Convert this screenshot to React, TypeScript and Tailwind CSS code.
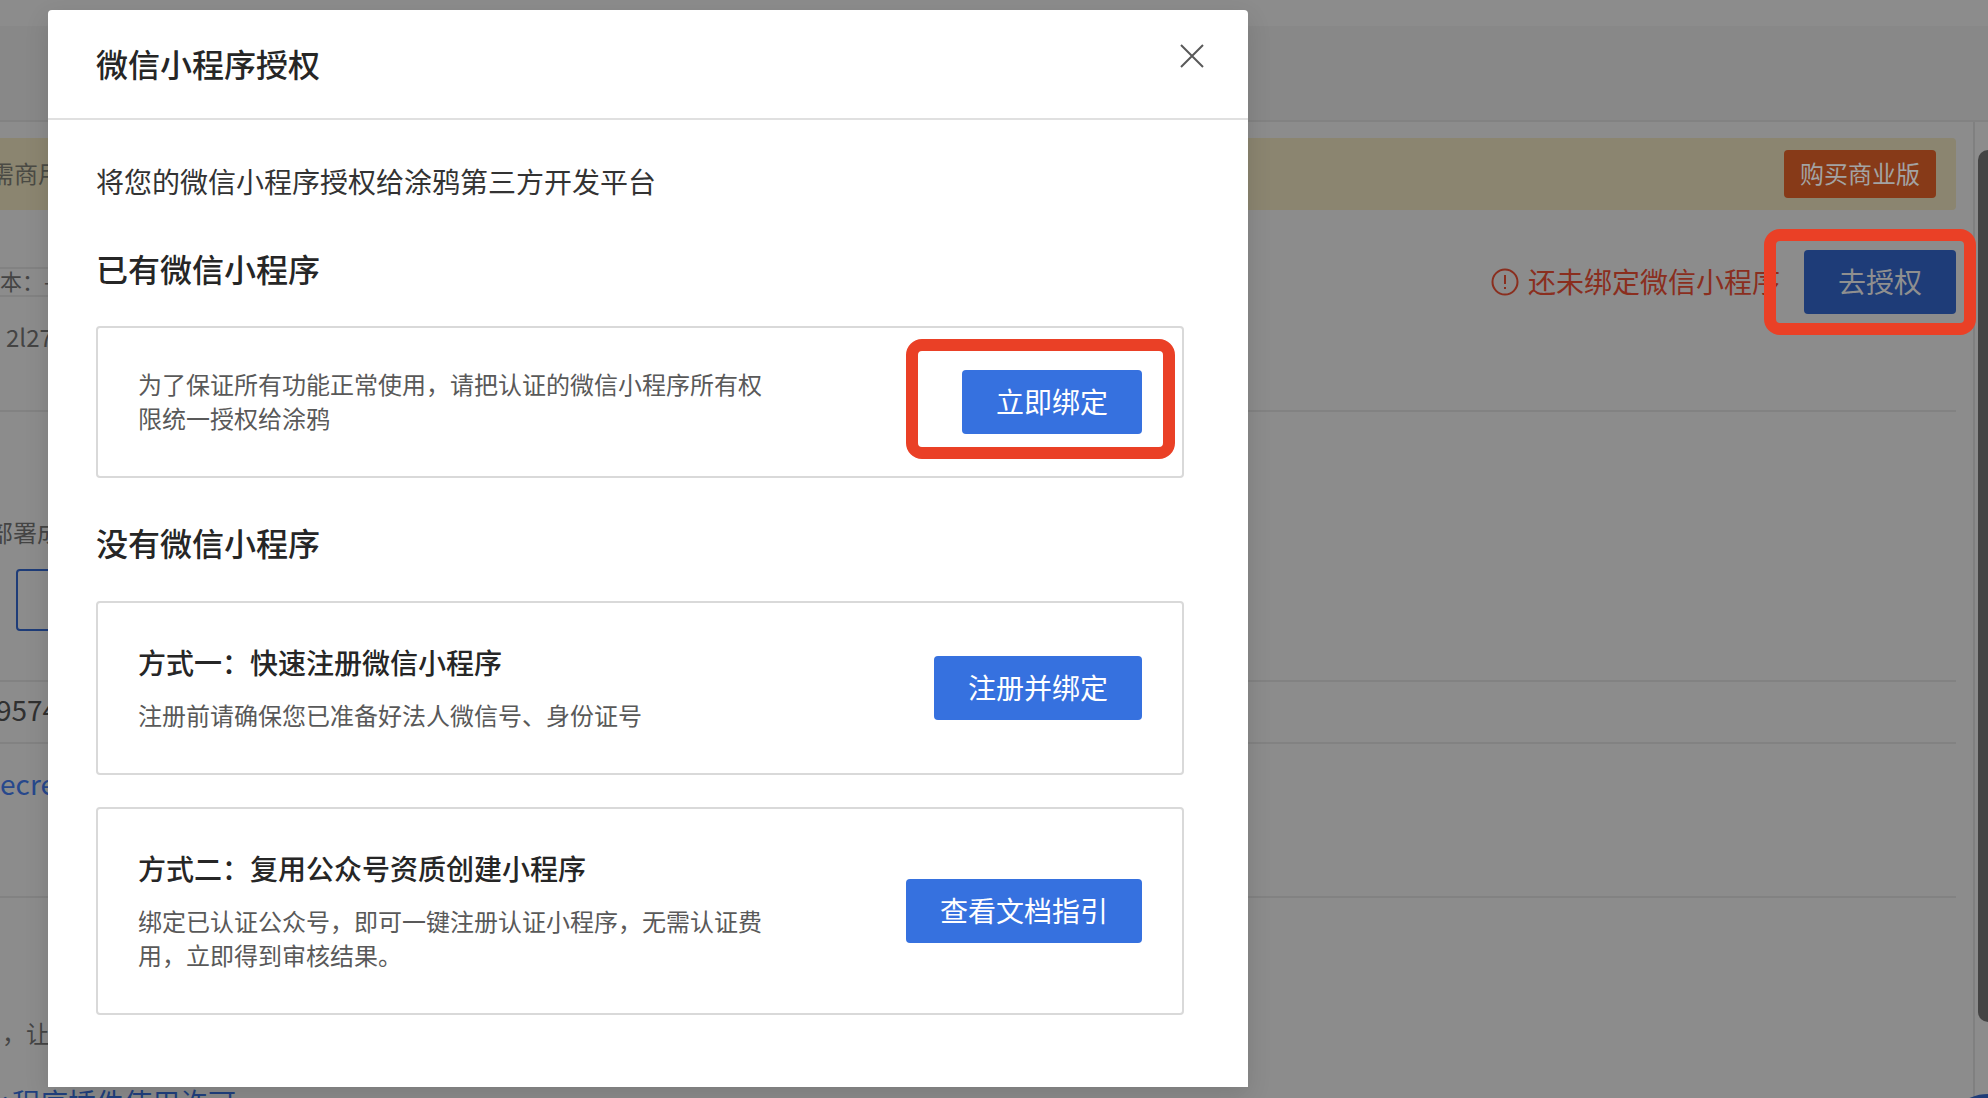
const cjk = "font-['PingFang_SC','Noto_Sans_CJK_SC','Noto_Sans',sans-serif]"

function BlueButton({ label }: { label: string }) {
  return (
    <button className="h-16 shrink-0 rounded bg-[#3671df] px-[34px] pb-[2px] text-[28px] text-white">
      {label}
    </button>
  )
}

function Highlight({ className }: { className: string }) {
  return <div className={`absolute rounded-[16px] border-[12px] border-[#ea4026] ${className}`} />
}

function BackgroundPage() {
  return (
    <div className="flex h-full w-full flex-col overflow-hidden bg-[#8c8c8c] text-[#444444]">
      <div className="h-[26px] shrink-0 bg-[#8c8c8c]" />
      <div className="h-[96px] shrink-0 border-b-2 border-[#828282] bg-[#888888]" />
      <div className="flex min-h-0 flex-1">
        <div className="w-[1973px] shrink-0 pr-[17px]">
          <div className="mt-4 flex h-[72px] items-center justify-between rounded-r bg-[#8b8570] pr-5">
            <span className="-ml-[10px] pb-[2px] text-[24px] text-[#4a4a44]">需商用版</span>
            <button className="h-12 w-[152px] rounded bg-[#873a18] pb-[2px] text-[24px] text-[#a3a3a3]">购买商业版</button>
          </div>

          <div className="flex h-[202px] items-start justify-between border-b-2 border-[#828282]">
            <div className="mt-[57px] flex flex-col">
              <span className="h-[30px] border-y-2 border-[#828282] pr-12 text-[22px] leading-[22px]">本：-</span>
              <span className="mt-[25px] pl-[6px] text-[24px] leading-[30px]">2l27</span>
            </div>
            <div className="relative mt-10 flex items-center">
              <svg className="mr-[9px] h-[28px] w-[28px]" viewBox="0 0 28 28" fill="none" stroke="#8a2e1e" strokeWidth="2">
                <circle cx="14" cy="14" r="12.5" />
                <path d="M14 7v9M14 19v2" />
              </svg>
              <span className="pb-[2px] text-[28px] text-[#8a2e1e]">还未绑定微信小程序</span>
              <button className="ml-6 h-16 w-[152px] rounded bg-[#1e3c78] pb-[2px] text-[28px] text-[#8f8f8f]">去授权</button>
              <Highlight className="-top-[21px] -right-[20px] h-[106px] w-[212px]" />
            </div>
          </div>

          <div className="mt-[100px] -ml-[11px] text-[24px] leading-[40px]">部署成功</div>
          <div className="mt-[17px] ml-4 h-[62px] w-[120px] rounded border-2 border-[#1e3c78]" />
          <div className="mt-[49px] border-y-2 border-[#828282] pt-[10px] pb-4 text-[28px] leading-[34px] text-[#303030]">
            <span className="-ml-[4px]">9574</span>
          </div>
          <div className="mt-[19px] -ml-[13px] text-[28px] leading-[40px] text-[#27488c]">secret</div>
          <div className="mt-[93px] border-b-2 border-[#828282]" />
          <div className="mt-[115px] pl-[2px] text-[24px] leading-[40px]">，让</div>
          <div className="mt-[29px] -ml-4 text-[28px] leading-[40px] text-[#20407f]">小程序插件使用许可</div>
        </div>
        <div className="flex w-[15px] shrink-0 border-l-2 border-[#808080]">
          <div className="mt-[28px] ml-[3px] h-[872px] w-[10px] rounded-l-[10px] bg-[#444444]" />
        </div>
      </div>
    </div>
  )
}

function AuthDialog() {
  return (
    <div className="absolute top-[10px] left-12 h-[1077px] w-[1200px] rounded-t bg-white shadow-[0_8px_24px_rgba(0,0,0,0.12)]">
      <div className="flex h-[110px] items-start justify-between border-b-2 border-[#e0e0e0] pr-[44px] pl-12">
        <h1 className="mt-[25px] text-[32px] leading-[56px] font-medium text-[#262626]">微信小程序授权</h1>
        <svg className="mt-[34px] h-6 w-6" viewBox="0 0 24 24" fill="none" stroke="#595959" strokeWidth="2">
          <path d="M1 1l22 22M23 1L1 23" />
        </svg>
      </div>
      <div className="pt-[41px] pr-16 pl-12">
        <p className="text-[28px] leading-10 text-[#333333]">将您的微信小程序授权给涂鸦第三方开发平台</p>

        <h2 className="mt-[45px] text-[32px] leading-[44px] font-medium text-[#262626]">已有微信小程序</h2>
        <div className="relative mt-9 flex h-[152px] items-center justify-between rounded border-2 border-[#d9d9d9] px-10">
          <p className="w-[640px] pb-[2px] text-[24px] leading-[34px] text-[#595959]">
            为了保证所有功能正常使用，请把认证的微信小程序所有权限统一授权给涂鸦
          </p>
          <BlueButton label="立即绑定" />
          <Highlight className="top-[11px] left-[808px] h-[120px] w-[269px]" />
        </div>

        <h2 className="mt-[42px] text-[32px] leading-[44px] font-medium text-[#262626]">没有微信小程序</h2>
        <div className="mt-[37px] flex h-[174px] items-center justify-between rounded border-2 border-[#d9d9d9] px-10">
          <div className="pb-[2px]">
            <h3 className="text-[28px] leading-10 font-medium text-[#262626]">方式一：快速注册微信小程序</h3>
            <p className="mt-4 w-[640px] text-[24px] leading-[34px] text-[#595959]">注册前请确保您已准备好法人微信号、身份证号</p>
          </div>
          <BlueButton label="注册并绑定" />
        </div>
        <div className="mt-8 flex h-[208px] items-center justify-between rounded border-2 border-[#d9d9d9] px-10">
          <div className="pb-[2px]">
            <h3 className="text-[28px] leading-10 font-medium text-[#262626]">方式二：复用公众号资质创建小程序</h3>
            <p className="mt-4 w-[640px] text-[24px] leading-[34px] text-[#595959]">
              绑定已认证公众号，即可一键注册认证小程序，无需认证费用，立即得到审核结果。
            </p>
          </div>
          <BlueButton label="查看文档指引" />
        </div>
      </div>
    </div>
  )
}

function App() {
  return (
    <div className={`relative h-[1098px] w-[1988px] overflow-hidden ${cjk}`}>
      <BackgroundPage />
      <AuthDialog />
      <div className="absolute -right-[45px] -bottom-[86px] h-[90px] w-[90px] rounded-full bg-[#1e3c78]" />
    </div>
  )
}

export default App
